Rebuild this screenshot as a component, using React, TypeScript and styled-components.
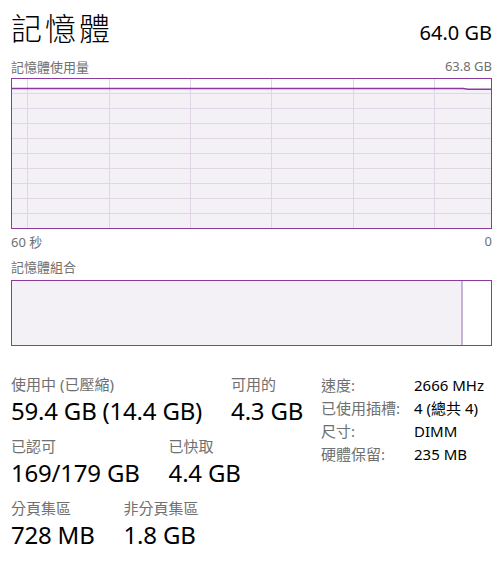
import React from "react";
import styled, { createGlobalStyle } from "styled-components";

const Global = createGlobalStyle`
  html, body { margin: 0; padding: 0; background: #ffffff; }
  body { font-family: "Noto Sans", "Noto Sans CJK TC", sans-serif; color: #000; }
`;

const PURPLE = "#8b3a9e";
const FILL = "#f4f1f6";
const GRID = "#e0d6e6";
const GRAY = "#707070";

const Page = styled.div`
  width: 502px;
  height: 576px;
  box-sizing: border-box;
  padding: 0 10px 0 11px;
  display: flex;
  flex-direction: column;
`;

const Header = styled.div`
  display: flex;
  justify-content: space-between;
  align-items: baseline;
  height: 54px;
  padding-top: 7px;
  box-sizing: border-box;
`;

const Title = styled.h1`
  margin: 0;
  font-family: "Noto Sans CJK TC", sans-serif;
  font-weight: 300;
  font-size: 31px;
  letter-spacing: 3px;
  line-height: 40px;
`;

const Total = styled.div`
  font-size: 20px;
  line-height: 28px;
`;

const CaptionRow = styled.div<{ $h?: number }>`
  display: flex;
  justify-content: space-between;
  align-items: center;
  height: ${(p) => p.$h ?? 24}px;
  font-size: 13px;
  color: ${GRAY};
`;

const Graph = styled.div`
  height: 151px;
  border: 1px solid ${PURPLE};
  box-sizing: border-box;
  background: #fff;
  svg { display: block; }
`;

const Composition = styled.div`
  height: 66px;
  border: 1px solid ${PURPLE};
  box-sizing: border-box;
  display: flex;
  margin-top: 1px;
`;

const InUse = styled.div<{ $w: number }>`
  width: ${(p) => p.$w}px;
  background: ${FILL};
  border-right: 2px solid #c6b4d2;
`;

const Stats = styled.div`
  display: flex;
  justify-content: space-between;
  margin-top: 28px;
`;

const LeftStats = styled.div`
  display: flex;
  flex-direction: column;
  gap: 8px;
`;

const StatRow = styled.div`
  display: flex;
  gap: 29px;
`;

const Stat = styled.div`
  display: flex;
  flex-direction: column;
`;

const Label = styled.div`
  font-size: 15px;
  color: ${GRAY};
  line-height: 20px;
  height: 20px;
`;

const Value = styled.div`
  font-size: 24px;
  line-height: 34px;
  letter-spacing: -0.2px;
`;

const Details = styled.div`
  display: grid;
  grid-template-columns: 93px auto;
  grid-auto-rows: 23px;
  width: 171px;
  font-size: 15px;
  line-height: 23px;
`;

const DetailLabel = styled.div`
  color: ${GRAY};
`;

const DetailValue = styled.div`
  color: #000;
`;

const W = 479;
const H = 149;

function UsageChart() {
  const rows = Array.from({ length: 9 }, (_, i) => 14.5 + i * 15);
  const cols = [15.5, 97.5, 178.5, 259.5, 341.5, 422.5];
  const lineY = 9.5;
  return (
    <svg width={W} height={H} viewBox={`0 0 ${W} ${H}`}>
      <path d={`M0 ${lineY} L451 ${lineY} L456 ${lineY + 0.8} L${W} ${lineY + 0.8} L${W} ${H} L0 ${H} Z`} fill={FILL} />
      {rows.map((y) => (
        <line key={y} x1={0} x2={W} y1={y} y2={y} stroke={GRID} strokeWidth={1} />
      ))}
      {cols.map((x) => (
        <line key={x} x1={x} x2={x} y1={0} y2={H} stroke={GRID} strokeWidth={1} />
      ))}
      <path d={`M0 ${lineY} L451 ${lineY} L456 ${lineY + 0.8} L${W} ${lineY + 0.8}`} fill="none" stroke={PURPLE} strokeWidth={1.4} />
    </svg>
  );
}

export default function App() {
  return (
    <>
      <Global />
      <Page>
        <Header>
          <Title>記憶體</Title>
          <Total>64.0 GB</Total>
        </Header>
        <CaptionRow $h={24}>
          <span>記憶體使用量</span>
          <span>63.8 GB</span>
        </CaptionRow>
        <Graph>
          <UsageChart />
        </Graph>
        <CaptionRow $h={24}>
          <span>60 秒</span>
          <span>0</span>
        </CaptionRow>
        <CaptionRow $h={26}>
          <span>記憶體組合</span>
        </CaptionRow>
        <Composition>
          <InUse $w={449} />
        </Composition>
        <Stats>
          <LeftStats>
            <StatRow>
              <Stat>
                <Label>使用中 (已壓縮)</Label>
                <Value>59.4 GB (14.4 GB)</Value>
              </Stat>
              <Stat>
                <Label>可用的</Label>
                <Value>4.3 GB</Value>
              </Stat>
            </StatRow>
            <StatRow>
              <Stat>
                <Label>已認可</Label>
                <Value>169/179 GB</Value>
              </Stat>
              <Stat>
                <Label>已快取</Label>
                <Value>4.4 GB</Value>
              </Stat>
            </StatRow>
            <StatRow>
              <Stat>
                <Label>分頁集區</Label>
                <Value>728 MB</Value>
              </Stat>
              <Stat>
                <Label>非分頁集區</Label>
                <Value>1.8 GB</Value>
              </Stat>
            </StatRow>
          </LeftStats>
          <Details>
            <DetailLabel>速度:</DetailLabel>
            <DetailValue>2666 MHz</DetailValue>
            <DetailLabel>已使用插槽:</DetailLabel>
            <DetailValue>4 (總共 4)</DetailValue>
            <DetailLabel>尺寸:</DetailLabel>
            <DetailValue>DIMM</DetailValue>
            <DetailLabel>硬體保留:</DetailLabel>
            <DetailValue>235 MB</DetailValue>
          </Details>
        </Stats>
      </Page>
    </>
  );
}
